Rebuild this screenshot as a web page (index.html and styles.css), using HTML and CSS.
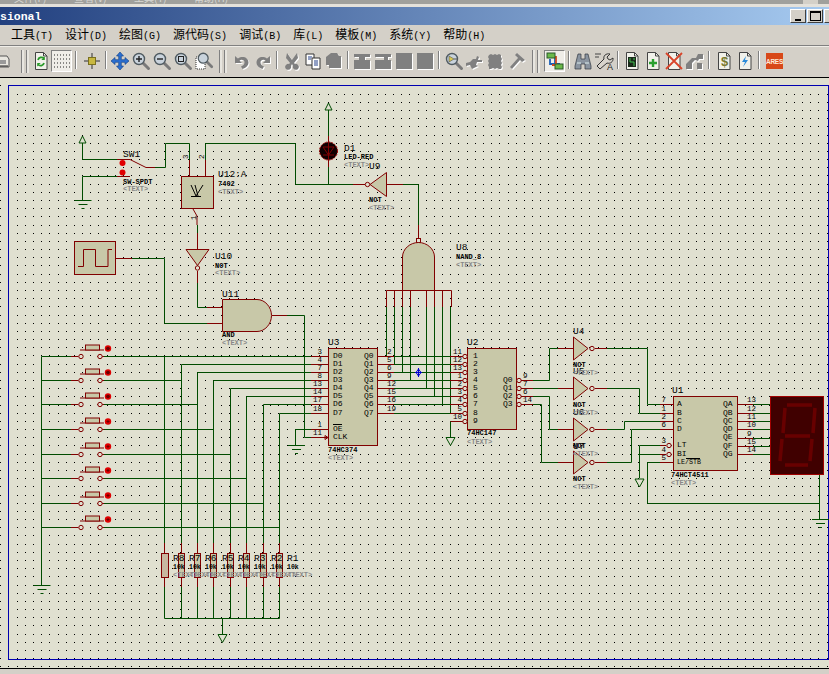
FILE: index.html
```html
<!DOCTYPE html>
<html lang="zh">
<head>
<meta charset="utf-8">
<title>Proteus Professional</title>
<link rel="stylesheet" href="styles.css">
</head>
<body>
<div class="app">
  <div class="strip">
    <span class="strip-item">文件(F)</span>
    <span class="strip-item">查看(V)</span>
    <span class="strip-item">工具(T)</span>
    <span class="strip-item">帮助(H)</span>
    <span class="strip-box"></span>
  </div>
  <div class="lightband"></div>
  <header class="titlebar">
    <span class="title">sional</span>
    <div class="winbtns">
      <span class="winbtn"><i class="min"></i></span>
      <span class="winbtn"><i class="max"></i></span>
      <span class="winbtn"></span>
    </div>
  </header>
  <nav class="menu">
    <span>工具<b>(T)</b></span><span>设计<b>(D)</b></span><span>绘图<b>(G)</b></span><span>源代码<b>(S)</b></span><span>调试<b>(B)</b></span><span>库<b>(L)</b></span><span>模板<b>(M)</b></span><span>系统<b>(Y)</b></span><span>帮助<b>(H)</b></span>
  </nav>
  <div class="toolbar">
    <svg width="0" height="0" class="defs">
      <symbol id="mag" viewBox="0 0 20 20">
        <path d="M12 12l5.5 5.5" stroke="#7a7a7a" stroke-width="3" stroke-linecap="round" fill="none"/>
        <circle cx="8" cy="8" r="5.5" fill="#c9d3dc" stroke="#4f5a60" stroke-width="1.4"/>
      </symbol>
      <symbol id="page" viewBox="0 0 20 20">
        <path d="M4.5 1.5h8l3.5 3.5v13.5h-11.500z" fill="#f1f1ea" stroke="#444"/>
        <path d="M12.500 1.500v3.500h3.500" fill="none" stroke="#444"/>
      </symbol>
    </svg>

    <span class="lead">
      <svg class="ico" width="10" height="20" viewBox="0 0 10 20"><path d="M-3 5h10l2 3v8h-12z" fill="#e8e6df" stroke="#555"/><path d="M0 9h6v4h-6z" fill="#999"/><path d="M-3 15h11" stroke="#222"/></svg>
    </span>
    <span class="grip grip-s"></span>

    <span class="btn"><svg class="ico" width="20" height="20"><use href="#page" width="20" height="20"/><path d="M7 9a3.500 3.500 0 0 1 6-1.500M13 12a3.500 3.500 0 0 1-6 1.500" fill="none" stroke="#2a9a2a" stroke-width="1.800"/><path d="M13.800 5.500v3.500h-3.500zM6.200 15.500v-3.500h3.500z" fill="#2a9a2a"/></svg></span>
    <span class="btn on"><svg class="ico" width="20" height="20"><path d="M2 4h16M2 8h16M2 12h16M2 16h16" stroke="#222" stroke-dasharray="1 2" fill="none"/></svg></span>
    <span class="sep sep-l"></span>

    <span class="btn"><svg class="ico" width="20" height="20"><path d="M10 2v16M2 10h16" stroke="#333" fill="none"/><rect x="6.500" y="6.500" width="7" height="7" fill="#c8b840" stroke="#7a7020"/></svg></span>
    <span class="sep"></span>

    <span class="btn"><svg class="ico" width="20" height="20"><path d="M10 1l3.500 4h-2.200v3.700h3.700v-2.200l4 3.500-4 3.500v-2.200h-3.700v3.700h2.200l-3.500 4-3.500-4h2.200v-3.700h-3.700v2.200l-4-3.500 4-3.500v2.200h3.700v-3.700h-2.200z" fill="#2b6fd0" stroke="#0d3a80" stroke-width=".6"/></svg></span>
    <span class="btn"><svg class="ico" width="20" height="20"><use href="#mag" width="20" height="20"/><path d="M5 8h6M8 5v6" stroke="#222" stroke-width="1.400"/></svg></span>
    <span class="btn"><svg class="ico" width="20" height="20"><use href="#mag" width="20" height="20"/><path d="M5 8h6" stroke="#222" stroke-width="1.400"/></svg></span>
    <span class="btn"><svg class="ico" width="20" height="20"><use href="#mag" width="20" height="20"/><rect x="5.500" y="5.500" width="5" height="5" fill="none" stroke="#222"/></svg></span>
    <span class="btn"><svg class="ico" width="20" height="20"><path d="M2 6h9v12h-9z" fill="#fff" stroke="#333" stroke-dasharray="1 1"/><use href="#mag" x="2" y="0" width="18" height="18"/></svg></span>
    <span class="grip"></span>

    <span class="btn"><svg class="ico dis" width="20" height="20"><path d="M3 5v7h7l-2.500-2.500c2-1.500 5-.5 5 2 0 2-1.500 3-3.500 4l1.500 2.500c3.500-1 6-3.500 6-6.500 0-5-6-7-10.500-4z" fill="#808080"/></svg></span>
    <span class="btn"><svg class="ico dis" width="20" height="20"><path d="M17 5v7h-7l2.500-2.500c-2-1.500-5-.5-5 2 0 2 1.500 3 3.500 4l-1.500 2.500c-3.500-1-6-3.500-6-6.500 0-5 6-7 10.500-4z" fill="#808080"/></svg></span>
    <span class="sep sep-m"></span>

    <span class="btn"><svg class="ico dis" width="20" height="20"><path d="M5 2l5 7 5-7 1 5-4 5 1 1a3 3 0 1 1-2 2l-1-2-1 2a3 3 0 1 1-2-2l1-1-4-5z" fill="#808080"/></svg></span>
    <span class="btn"><svg class="ico" width="20" height="20"><path d="M3 3h8v11h-8z" fill="#fff" stroke="#333"/><path d="M9 7h8v11h-8z" fill="#fff" stroke="#333"/><path d="M5 6h4M5 8h3M11 10h4M11 12h4M11 14h4" stroke="#24408a"/></svg></span>
    <span class="btn"><svg class="ico dis" width="20" height="20"><path d="M2 6l5-4h6l2 3h2v12h-12v-3h-3z" fill="#808080"/></svg></span>
    <span class="sep"></span>

    <span class="btn"><svg class="ico dis" width="20" height="20"><path d="M2 3h16v3h-5v3h5v9h-16v-9h5v-3h-5z" fill="#808080"/></svg></span>
    <span class="btn"><svg class="ico dis" width="20" height="20"><path d="M2 3h16v3h-3v3h3v9h-16v-9h9v-3h-9z" fill="#808080"/></svg></span>
    <span class="btn"><svg class="ico dis" width="20" height="20"><rect x="2" y="2" width="16" height="16" fill="#808080"/></svg></span>
    <span class="btn"><svg class="ico dis" width="20" height="20"><rect x="2" y="2" width="16" height="16" fill="#808080"/></svg></span>
    <span class="sep sep-m"></span>

    <span class="btn"><svg class="ico" width="20" height="20"><use href="#mag" width="20" height="20"/><path d="M5 5l5 3-5 3z" fill="#d8c850" stroke="#555" stroke-width=".6"/><path d="M10 8h4" stroke="#555"/></svg></span>
    <span class="btn"><svg class="ico dis" width="20" height="20"><path d="M1 12l4-1 3-3h3l1-3 2 1-1 3h4v2h-5l-1 3 2 1-6 3-2-4-4 1z" fill="#808080"/></svg></span>
    <span class="btn"><svg class="ico dis" width="20" height="20"><path d="M5 3l2 1 2-1 2 1 2-1 2 1v2l1 2-1 2 1 2-1 2 1 2-1 2h-2l-2-1-2 1-2-1-2 1h-2v-2l-1-2 1-2-1-2 1-2-1-2 1-2z" fill="#808080"/></svg></span>
    <span class="btn"><svg class="ico dis" width="20" height="20"><path d="M10 2l8 7-3 2-2-2-8 9-2-2 8-9-3-3z" fill="#808080"/></svg></span>
    <span class="grip"></span>

    <span class="btn on"><svg class="ico" width="20" height="20"><path d="M5 8v5h10M10 7v6" fill="none" stroke="#1a5fb8" stroke-width="1.800"/><path d="M8 6h3v8h-4" fill="none" stroke="#d04a20" stroke-width="1.800"/><rect x="2" y="2" width="8" height="5" fill="#6ab84a" stroke="#2a5a2a"/><rect x="10" y="13" width="8" height="5" fill="#6ab84a" stroke="#2a5a2a"/></svg></span>
    <span class="sep"></span>

    <span class="btn"><svg class="ico" width="20" height="20"><path d="M5 3h3v5h4v-5h3l3 12v3h-6v-5h-4v5h-6v-3z" fill="#8a94a0" stroke="#303840" stroke-width=".7"/><path d="M4 12h4M12 12h4" stroke="#dee"/></svg></span>
    <span class="btn"><svg class="ico" width="20" height="20"><path d="M1 3h6M1 6h4" stroke="#444"/><path d="M3 15l7-7c-1-3 2-6 6-5l-3 3 1 2 2 1 3-2c.500 4-3 6-6 5l-7 6z" fill="#d8d4cc" stroke="#333"/><text class="ico-a" x="13" y="19">A</text></svg></span>
    <span class="sep"></span>

    <span class="btn"><svg class="ico" width="20" height="20"><use href="#page" width="20" height="20"/><rect x="6" y="6" width="8" height="10" fill="#1a2a1a"/><path d="M8 7v4h4v4M12 7v2" stroke="#40c050" fill="none"/></svg></span>
    <span class="btn"><svg class="ico" width="20" height="20"><use href="#page" width="20" height="20"/><path d="M10 8v8M6 12h8" stroke="#2aa030" stroke-width="2.400"/></svg></span>
    <span class="btn"><svg class="ico" width="20" height="20"><use href="#page" width="20" height="20"/><path d="M2 2l16 16M18 2l-16 16" stroke="#d8442a" stroke-width="1.800"/></svg></span>
    <span class="btn"><svg class="ico dis" width="20" height="20"><path d="M1 18v-5l6-6h4l2-4h5v5h-4l-1 2-3-1-3 3v6zM12 18v-6h5v6z" fill="#808080"/></svg></span>
    <span class="sep sep-m"></span>

    <span class="btn"><svg class="ico" width="20" height="20"><use href="#page" width="20" height="20"/><text class="ico-d" x="7" y="15">$</text></svg></span>
    <span class="btn"><svg class="ico" width="20" height="20"><use href="#page" width="20" height="20"/><path d="M11 5l-4 6h3l-2 5 5-7h-3z" fill="#2a8ad8"/></svg></span>
    <span class="sep sep-l"></span>

    <span class="btn"><span class="ares">ARES</span></span>
  </div>

  <main class="canvas">
    <svg class="sheet" width="829" height="590" viewBox="0 78 829 590">
      <defs>
        <g id="dotrow">
          <rect x="0" width="1" height="1"/><rect x="8" width="1" height="1"/><rect x="16" width="1" height="1"/><rect x="24" width="1" height="1"/><rect x="32" width="1" height="1"/><rect x="41" width="1" height="1"/><rect x="49" width="1" height="1"/><rect x="57" width="1" height="1"/><rect x="65" width="1" height="1"/><rect x="73" width="1" height="1"/><rect x="81" width="1" height="1"/>
        </g>
        <pattern id="dots" patternUnits="userSpaceOnUse" x="17" y="94" width="90" height="90">
          <use href="#dotrow" y="0"/><use href="#dotrow" y="8"/><use href="#dotrow" y="16"/><use href="#dotrow" y="24"/><use href="#dotrow" y="32"/><use href="#dotrow" y="41"/><use href="#dotrow" y="49"/><use href="#dotrow" y="57"/><use href="#dotrow" y="65"/><use href="#dotrow" y="73"/><use href="#dotrow" y="81"/>
        </pattern>
        <g id="button">
          <path class="r" d="M-11 0h7.500M15 0h7M-2 -6.500h24"/>
          <circle class="r nf" cx="-1" cy="0" r="2.200"/>
          <circle class="r nf" cx="18" cy="0" r="2.200"/>
          <rect class="body" x="3.500" y="-11.500" width="14" height="5"/>
          <circle cx="26" cy="-8" r="3.200" fill="#e00000"/>
          <path d="M24.500 -8h3M26 -9.500v3" stroke="#700000"/>
        </g>
        <path id="gnd" class="w" d="M-8 0h17M-4 4h9M-1 8h3"/>
        <path id="pwr" class="w nf" d="M0 0l-3.500 7h7z"/>
        <path id="dnarrow" class="w nf" d="M-4 0h9l-4.500 8z"/>
      </defs>

      <rect x="0" y="78" width="829" height="590" fill="url(#dots)"/>
      <rect class="frame" x="8.500" y="85.500" width="820" height="574"/>
      <rect x="16" y="93" width="812" height="566" fill="url(#dots)"/>

      <!-- wires -->
      <path class="w" d="M82.500 143V159.500H117M155 167.500H165.500V143.500H189.500V160M82.500 200V176.500H117M205.500 160V143.500H295.500V184.500H353"/>
      <path class="r" d="M117 159.500H130L146 167.500H155M117 176.500H130M189.500 160V176M205.500 160V176M353 184.500H365"/>
      <circle cx="122.500" cy="163" r="3" fill="#e00000"/>
      <circle cx="122.500" cy="172.500" r="3" fill="#e00000"/>
      <use href="#pwr" x="82.500" y="136"/>
      <use href="#gnd" x="82.500" y="200.500"/>

      <!-- U12 -->
      <rect class="body" x="181.500" y="176.500" width="32" height="32"/>
      <path class="k" d="M191 185l5 11 7-11M191 196.500h10M195 185l3 11"/>
      <path class="r" d="M193 209l4 7V225"/>
      <path class="w" d="M197.500 225V233"/>
      <path class="r" d="M197.500 233V249M197.500 271V283"/>
      <path class="w" d="M197.500 283V307.500H207"/>
      <path class="r" d="M207 307.500H222"/>

      <!-- U10 -->
      <path class="body" d="M186 249.500H209L197.500 265.500Z"/>
      <circle class="r nf" cx="197.500" cy="268" r="2.200"/>

      <!-- clock -->
      <rect class="body" x="74.500" y="241.500" width="41" height="33"/>
      <path class="r" d="M78 266.500H83.500V249.500H95.500V266.500H108V249.500H112"/>
      <path class="r" d="M116 258.500H132"/>
      <path class="w" d="M132 258.500H164.500V323.500H207"/>
      <path class="r" d="M207 323.500H222"/>

      <!-- U11 -->
      <path class="body" d="M222.500 299.500H257C265 299.500 271.500 307 271.500 315.500C271.500 324 265 331.500 257 331.500H222.500Z"/>
      <path class="r" d="M272 315.500H287"/>
      <path class="w" d="M287 315.500H304.500V437.500H311"/>

      <!-- D1 -->
      <use href="#pwr" x="328.500" y="103"/>
      <path class="w" d="M328.500 110V136M328.500 167V184.500"/>
      <path class="r" d="M328.500 136V167"/>
      <circle class="led" cx="328.500" cy="151" r="9"/>
      <path class="r" d="M328.500 142V160M323 147h11l-5.500 8zM323 155h11"/>

      <!-- U9 -->
      <circle class="r nf" cx="367.500" cy="184.500" r="2.200"/>
      <path class="body" d="M370 184.500L386.500 172.500V196.500Z"/>
      <path class="r" d="M387 184.500H403"/>
      <path class="w" d="M403 184.500H418.500V225"/>
      <path class="r" d="M418.500 225V238"/>
      <rect class="r nf" x="416.500" y="238.500" width="4" height="4"/>

      <!-- U8 -->
      <path class="body" d="M402.500 290.500V257C402.500 249 410 242.500 418.500 242.500C427 242.500 434.500 249 434.500 257V290.500Z"/>
      <path class="r" d="M386.500 307V290.500H451.500V307M394.500 290.500V307M402.500 290.500V307M410.500 290.500V307M426.500 290.500V307M434.500 290.500V307M442.500 290.500V307"/>
      <path class="w" d="M386.500 307V356M394.500 307V364M402.500 307V372M410.500 307V380M426.500 307V388M434.500 307V396M442.500 307V404M450.500 307V413"/>

      <!-- switches -->
      <use href="#button" x="82" y="356.500"/>
      <use href="#button" x="82" y="380.500"/>
      <use href="#button" x="82" y="404.500"/>
      <use href="#button" x="82" y="429.500"/>
      <use href="#button" x="82" y="454.500"/>
      <use href="#button" x="82" y="478.500"/>
      <use href="#button" x="82" y="503.500"/>
      <use href="#button" x="82" y="527.500"/>
      <circle cx="108" cy="348.500" r="1.800" fill="#6a0000"/>
      <circle cx="108" cy="372.500" r="1.800" fill="#6a0000"/>
      <circle cx="108" cy="396.500" r="1.800" fill="#6a0000"/>
      <path class="w" d="M41.500 356.500V585M41.500 356.500H71M41 380.500H71M41 404.500H71M41 429.500H71M41 454.500H71M41 478.500H71M41 503.500H71M41 527.500H71"/>
      <path class="w" d="M104 356.500H311M104 380.500H181M104 404.500H197M104 429.500H213M104 454.500H230M104 478.500H246M104 503.500H263M104 527.500H279"/>
      <path class="w" d="M181.500 543V364.500H311M197.500 543V372.500H311M213.500 543V380.500H311M230.500 543V388.500H311M246.500 543V396.500H311M263.500 543V404.500H311M279.500 543V413.500H311M164.500 356V543"/>
      <use href="#gnd" x="41.500" y="585.500"/>

      <!-- resistors -->
      <path class="r" d="M164.500 543V587M181.500 543V587M197.500 543V587M213.500 543V587M230.500 543V587M246.500 543V587M263.500 543V587M279.500 543V587"/>
      <rect class="resistor" x="161.500" y="553.500" width="7" height="24"/>
      <rect class="body" x="178.500" y="553.500" width="6" height="24"/>
      <rect class="body" x="194.500" y="553.500" width="6" height="24"/>
      <rect class="body" x="210.500" y="553.500" width="6" height="24"/>
      <rect class="body" x="227.500" y="553.500" width="6" height="24"/>
      <rect class="body" x="243.500" y="553.500" width="6" height="24"/>
      <rect class="body" x="260.500" y="553.500" width="6" height="24"/>
      <rect class="body" x="276.500" y="553.500" width="6" height="24"/>
      <path class="w" d="M164.500 587V618.500H279.500V587M181.500 587V618M197.500 587V618M213.500 587V618M230.500 587V618M246.500 587V618M263.500 587V618M222.500 618V634"/>
      <use href="#dnarrow" x="222" y="634.500"/>

      <!-- U3 -->
      <rect class="body" x="328.500" y="348.500" width="49" height="97"/>
      <path class="r" d="M311 356.500H328M311 364.500H328M311 372.500H328M311 380.500H328M311 388.500H328M311 396.500H328M311 404.500H328M311 413.500H328M311 429.500H328M311 437.500H328"/>
      <path class="w" d="M295.500 445V429.500H311"/>
      <use href="#gnd" x="296" y="445.500"/>
      <path class="r" d="M377 356.500H394M377 364.500H394M377 372.500H394M377 380.500H394M377 388.500H394M377 396.500H394M377 404.500H394M377 413.500H394"/>
      <path class="w" d="M394 356.500H450M394 364.500H450M394 372.500H450M394 380.500H450M394 388.500H450M394 396.500H450M394 404.500H450M394 413.500H450"/>
      <path class="r" d="M328 437.500l-3-2v4zM450 356.500H463M450 364.500H463M450 372.500H463M450 380.500H463M450 388.500H463M450 396.500H463M450 404.500H463M450 413.500H463M450 421.500H463"/>
      <path class="mark" d="M418.500 368V377M415 372.500H422M418.500 369l-2.500 3.500 2.500 3.500 2.500-3.500z"/>

      <!-- U2 -->
      <rect class="body" x="467.500" y="348.500" width="49" height="81"/>
      <g class="r nf">
        <circle cx="465" cy="356.500" r="2.200"/><circle cx="465" cy="364.500" r="2.200"/><circle cx="465" cy="372.500" r="2.200"/><circle cx="465" cy="380.500" r="2.200"/><circle cx="465" cy="388.500" r="2.200"/><circle cx="465" cy="396.500" r="2.200"/><circle cx="465" cy="404.500" r="2.200"/><circle cx="465" cy="413.500" r="2.200"/><circle cx="465" cy="421.500" r="2.200"/>
        <circle cx="519" cy="380.500" r="2.200"/><circle cx="519" cy="388.500" r="2.200"/><circle cx="519" cy="396.500" r="2.200"/><circle cx="519" cy="404.500" r="2.200"/>
      </g>
      <path class="w" d="M450.500 421.500V437"/>
      <use href="#dnarrow" x="450" y="437.500"/>
      <path class="r" d="M521 380.500H533M521 388.500H533M521 396.500H533M521 404.500H533"/>

      <path class="w" d="M533 380.500H549.500V348.500H558M533 388.500H558M533 396.500H549.500V429.500H558M533 404.500H541.500V462.500H558"/>
      <path class="r" d="M558 348.500H573M558 388.500H573M558 429.500H573M558 462.500H573M595 348.500H607M595 388.500H607M595 429.500H607M595 462.500H607M660 404.500H673M660 413.500H673M660 421.500H673M660 429.500H673M660 445.500H666M660 454.500H666M660 462.500H673"/>
      <path class="body" d="M573.500 337L588 348.500L573.500 360ZM573.500 377L588 388.500L573.500 400ZM573.500 418L588 429.500L573.500 441ZM573.500 451L588 462.500L573.500 474Z"/>
      <g class="r nf">
        <circle cx="592" cy="348.500" r="2.200"/><circle cx="592" cy="388.500" r="2.200"/><circle cx="592" cy="429.500" r="2.200"/><circle cx="592" cy="462.500" r="2.200"/>
        <circle cx="669" cy="445.500" r="2.200"/><circle cx="669" cy="454.500" r="2.200"/>
      </g>
      <path class="w" d="M607 348.500H647.500V404.500H660M607 388.500H639.500V413.500H660M607 429.500H624.500V421.500H660M607 462.500H631.500V429.500H660M660 445.500H639.500V478M638 454.500H660M660 462.500H647.500V503.500H820M819.500 474V519"/>
      <use href="#dnarrow" x="639" y="479"/>
      <use href="#gnd" x="820" y="519.500"/>

      <!-- U1 -->
      <rect class="body" x="673.500" y="396.500" width="64" height="74"/>
      <path class="r" d="M737 404.500H753M737 413.500H753M737 421.500H753M737 429.500H753M737 438.500H753M737 446.500H753M737 454.500H753"/>
      <path class="w" d="M753 404.500H770M753 413.500H770M753 421.500H770M753 429.500H770M753 438.500H770M753 446.500H770M753 454.500H770"/>

      <!-- display -->
      <rect class="display" x="770.500" y="396.500" width="53" height="78"/>
      <path class="seg" d="M787 405H812M815 408L813 433M812 439L810 461M785 465H808M780 461L782 439M783 433L785 408M785 436H810"/>

      <!-- labels -->
      <g class="t-name">
        <text x="123" y="157">SW1</text><text x="218" y="177">U12:A</text><text x="215" y="259">U10</text><text x="222" y="297">U11</text>
        <text x="344" y="151">D1</text><text x="369" y="169">U9</text><text x="456" y="250">U8</text><text x="328" y="345">U3</text><text x="467" y="345">U2</text>
        <text x="573" y="334">U4</text><text x="573" y="374">U5</text><text x="573" y="415">U6</text><text x="573" y="449">U7</text><text x="672" y="393">U1</text>
        <text x="173" y="561">R8</text><text x="189" y="561">R7</text><text x="205" y="561">R6</text><text x="222" y="561">R5</text><text x="238" y="561">R4</text><text x="254" y="561">R3</text><text x="271" y="561">R2</text><text x="287" y="561">R1</text>
      </g>
      <g class="t-val">
        <text x="123" y="184">SW-SPDT</text><text x="218" y="186">7402</text><text x="215" y="268">NOT</text><text x="222" y="337">AND</text><text x="344" y="159">LED-RED</text>
        <text x="369" y="202">NOT</text><text x="456" y="259">NAND_8</text><text x="328" y="452">74HC374</text><text x="467" y="435">74HC147</text>
        <text x="573" y="367">NOT</text><text x="573" y="407">NOT</text><text x="573" y="448">NOT</text><text x="573" y="481">NOT</text><text x="671" y="477">74HCT4511</text>
      </g>
      <g class="t-small">
        <text x="173" y="569">10k</text><text x="189" y="569">10k</text><text x="205" y="569">10k</text><text x="222" y="569">10k</text><text x="238" y="569">10k</text><text x="254" y="569">10k</text><text x="271" y="569">10k</text><text x="287" y="569">10k</text>
      </g>
      <g class="t-tx">
        <text x="123" y="191">&lt;TEXT&gt;</text><text x="218" y="194">&lt;TEXT&gt;</text><text x="215" y="275">&lt;TEXT&gt;</text><text x="222" y="345">&lt;TEXT&gt;</text><text x="344" y="167">&lt;TEXT&gt;</text>
        <text x="369" y="210">&lt;TEXT&gt;</text><text x="456" y="267">&lt;TEXT&gt;</text><text x="328" y="460">&lt;TEXT&gt;</text><text x="467" y="444">&lt;TEXT&gt;</text>
        <text x="573" y="375">&lt;TEXT&gt;</text><text x="573" y="415">&lt;TEXT&gt;</text><text x="573" y="456">&lt;TEXT&gt;</text><text x="573" y="489">&lt;TEXT&gt;</text><text x="671" y="485">&lt;TEXT&gt;</text>
        <text x="173" y="577">&lt;TEXT&gt;</text><text x="189" y="577">&lt;TEXT&gt;</text><text x="205" y="577">&lt;TEXT&gt;</text><text x="222" y="577">&lt;TEXT&gt;</text><text x="238" y="577">&lt;TEXT&gt;</text><text x="254" y="577">&lt;TEXT&gt;</text><text x="271" y="577">&lt;TEXT&gt;</text><text x="287" y="577">&lt;TEXT&gt;</text>
      </g>
      <g class="t-pin end">
        <text x="322" y="354">3</text><text x="322" y="362">4</text><text x="322" y="370">7</text><text x="322" y="378">8</text><text x="322" y="386">13</text><text x="322" y="394">14</text><text x="322" y="402">17</text><text x="322" y="411">18</text><text x="322" y="427">1</text><text x="322" y="435">11</text>
        <text x="462" y="354">11</text><text x="462" y="362">12</text><text x="462" y="370">13</text><text x="462" y="378">1</text><text x="462" y="386">2</text><text x="462" y="394">3</text><text x="462" y="402">4</text><text x="462" y="411">5</text><text x="462" y="419">10</text>
        <text x="666" y="402">7</text><text x="666" y="411">1</text><text x="666" y="419">2</text><text x="666" y="427">6</text><text x="666" y="443">3</text><text x="666" y="452">4</text><text x="666" y="460">5</text>
      </g>
      <g class="t-pin">
        <text x="387" y="354">2</text><text x="387" y="362">5</text><text x="387" y="370">6</text><text x="387" y="378">9</text><text x="387" y="386">12</text><text x="387" y="394">15</text><text x="387" y="402">16</text><text x="387" y="411">19</text>
        <text x="523" y="378">9</text><text x="523" y="386">7</text><text x="523" y="394">6</text><text x="523" y="402">14</text>
        <text x="747" y="402">13</text><text x="747" y="411">12</text><text x="747" y="419">11</text><text x="747" y="427">10</text><text x="747" y="436">9</text><text x="747" y="444">15</text><text x="747" y="452">14</text>
        <text transform="translate(188 159) rotate(-90)" x="0" y="0">3</text><text transform="translate(204 159) rotate(-90)" x="0" y="0">2</text><text transform="translate(196 220) rotate(-90)" x="0" y="0">1</text>
      </g>
      <g class="t-lbl">
        <text x="333" y="358">D0</text><text x="333" y="366">D1</text><text x="333" y="374">D2</text><text x="333" y="382">D3</text><text x="333" y="390">D4</text><text x="333" y="398">D5</text><text x="333" y="406">D6</text><text x="333" y="415">D7</text>
        <text x="364" y="358">Q0</text><text x="364" y="366">Q1</text><text x="364" y="374">Q2</text><text x="364" y="382">Q3</text><text x="364" y="390">Q4</text><text x="364" y="398">Q5</text><text x="364" y="406">Q6</text><text x="364" y="415">Q7</text>
        <text x="333" y="431">OE</text><text x="333" y="439">CLK</text>
        <text x="473" y="358">1</text><text x="473" y="366">2</text><text x="473" y="374">3</text><text x="473" y="382">4</text><text x="473" y="390">5</text><text x="473" y="398">6</text><text x="473" y="406">7</text><text x="473" y="415">8</text><text x="473" y="423">9</text>
        <text x="503" y="382">Q0</text><text x="503" y="390">Q1</text><text x="503" y="398">Q2</text><text x="503" y="406">Q3</text>
        <text x="677" y="406">A</text><text x="677" y="415">B</text><text x="677" y="423">C</text><text x="677" y="431">D</text><text x="677" y="447">LT</text><text x="677" y="456">BI</text><text x="677" y="464" textLength="24" lengthAdjust="spacingAndGlyphs">LE/STB</text>
        <text x="723" y="406">QA</text><text x="723" y="415">QB</text><text x="723" y="423">QC</text><text x="723" y="431">QD</text><text x="723" y="439">QE</text><text x="723" y="448">QF</text><text x="723" y="456">QG</text>
      </g>
      <path class="k" d="M333 424.500H342M686 458.500H700"/>
    </svg>
  </main>
  <div class="statusbar"></div>
</div>
</body>
</html>
```

FILE: styles.css
```css
html, body {
  margin: 0;
  padding: 0;
  background: #d4d0c8;
}

.app {
  width: 829px;
  height: 674px;
  display: flex;
  flex-direction: column;
  overflow: hidden;
  font-family: "Noto Sans CJK SC", "Liberation Sans", sans-serif;
}

.strip {
  height: 4px;
  flex: none;
  display: flex;
  gap: 20px;
  padding-left: 14px;
  overflow: hidden;
  background: #a0a09c;
  color: #d8d8d4;
  font-size: 10px;
  line-height: 10px;
}

.strip-item {
  margin-top: -7px;
  width: 40px;
  white-space: nowrap;
}

.strip-box {
  margin-left: auto;
  margin-right: 11px;
  width: 15px;
  background: #d4d0c8;
}

.lightband {
  height: 3px;
  flex: none;
  background: #e4e1da;
}

.titlebar {
  height: 18px;
  flex: none;
  display: flex;
  align-items: center;
  justify-content: space-between;
  background: linear-gradient(90deg, #22407f 0%, #a6caf0 100%);
  overflow: hidden;
}

.title {
  font-family: "Liberation Mono", monospace;
  font-weight: bold;
  font-size: 11.5px;
  color: #fff;
}

.winbtns {
  display: flex;
  gap: 0;
  margin-right: -12px;
}

.winbtn {
  width: 16px;
  height: 14px;
  box-sizing: border-box;
  margin-right: 1px;
  background: #d4d0c8;
  border: 1px solid;
  border-color: #fff #404040 #404040 #fff;
  display: flex;
  align-items: center;
  justify-content: center;
}

.min {
  width: 6px;
  height: 2px;
  margin-top: 7px;
  background: #000;
}

.max {
  width: 9px;
  height: 7px;
  border: 1px solid #000;
  border-top-width: 2px;
}

.menu {
  height: 21px;
  flex: none;
  box-sizing: border-box;
  border-bottom: 1px solid #808080;
  padding-left: 11px;
  display: flex;
  align-items: center;
  gap: 12px;
  background: #d4d0c8;
  color: #000;
  font-size: 12px;
  line-height: 20px;
}

.menu b {
  font-family: "Liberation Mono", monospace;
  font-weight: normal;
  font-size: 10px;
}

.toolbar {
  height: 32px;
  flex: none;
  box-sizing: border-box;
  display: flex;
  align-items: flex-start;
  padding-top: 3px;
  background: #d4d0c8;
  border-top: 1px solid #f0eee8;
  border-bottom: 1px solid #000;
}

.defs {
  position: absolute;
}

.lead {
  width: 21px;
  height: 22px;
  flex: none;
  display: flex;
  align-items: center;
}

.btn {
  width: 21px;
  height: 22px;
  flex: none;
  display: flex;
  align-items: center;
  justify-content: center;
  box-sizing: border-box;
}

.btn.on {
  background: #efede8;
  border: 1px solid;
  border-color: #808080 #fff #fff #808080;
}

.ico {
  display: block;
  flex: none;
}

.dis {
  filter: drop-shadow(1px 1px 0 #fff);
}

.ico-a {
  font-family: "Liberation Sans", sans-serif;
  font-size: 9px;
  fill: #222;
}

.ico-d {
  font-family: "Liberation Sans", sans-serif;
  font-size: 13px;
  font-weight: bold;
  fill: #7a7a30;
}

.ares {
  width: 17px;
  height: 16px;
  display: flex;
  align-items: center;
  justify-content: center;
  overflow: hidden;
  background: #d84818;
  color: #ffe8d8;
  font-family: "Liberation Sans", sans-serif;
  font-size: 6.5px;
  font-weight: bold;
  letter-spacing: -.3px;
}

.sep {
  flex: none;
  height: 20px;
  width: 7px;
}

.sep-m {
  width: 8px;
}

.sep-l {
  width: 9px;
}

.sep::before {
  content: "";
  display: block;
  width: 1px;
  height: 18px;
  margin: 1px 0 0 3px;
  background: #808080;
  box-shadow: 1px 0 0 #fff;
}

.grip {
  width: 17px;
  height: 24px;
  flex: none;
  display: flex;
  justify-content: center;
  gap: 2px;
}

.grip-s {
  width: 9px;
  justify-content: flex-start;
}

.grip::before,
.grip::after {
  content: "";
  display: block;
  width: 2px;
  height: 23px;
  background: #e8e6e0;
  border-left: 1px solid #808080;
}

.canvas {
  height: 591px;
  flex: none;
  box-sizing: border-box;
  background: #e0e0d0;
  border-bottom: 1px solid #000;
}

.sheet {
  display: block;
}

.frame {
  fill: #e0e0d0;
  stroke: #0000b0;
  stroke-width: 1;
}

.statusbar {
  flex: 1;
  background: #d4d0c8;
}

.w,
.r,
.k,
.seg,
.mark {
  fill: none;
  stroke-width: 1;
}

.w { stroke: #004c00; }
.r { stroke: #800000; }
.k { stroke: #000; }
.nf { fill: #e0e0d0; }

.mark { stroke: #0000d0; }

.led {
  fill: #100000;
  stroke: #a00000;
  stroke-dasharray: 2 1;
}

.body {
  fill: #c8c8a8;
  stroke: #800000;
  stroke-width: 1;
}

.resistor {
  fill: #c8b8a0;
  stroke: #800000;
}

.display {
  fill: #400000;
  stroke: #a00000;
}

.seg {
  stroke: #680000;
  stroke-width: 3.5;
}

.t-name text {
  font: 9.5px "Liberation Mono", monospace;
  fill: #000;
}

.t-val text {
  font: bold 7px "Liberation Mono", monospace;
  fill: #000;
}

.t-small text {
  font: bold 6.5px "Liberation Mono", monospace;
  fill: #000;
}

.t-tx text {
  font: bold 7px "Liberation Mono", monospace;
  fill: #888888;
}

.t-pin text {
  font: 7.5px "Liberation Mono", monospace;
  fill: #000;
}

.t-pin.end text {
  text-anchor: end;
}

.t-lbl text {
  font: 8px "Liberation Mono", monospace;
  fill: #000;
}
```
